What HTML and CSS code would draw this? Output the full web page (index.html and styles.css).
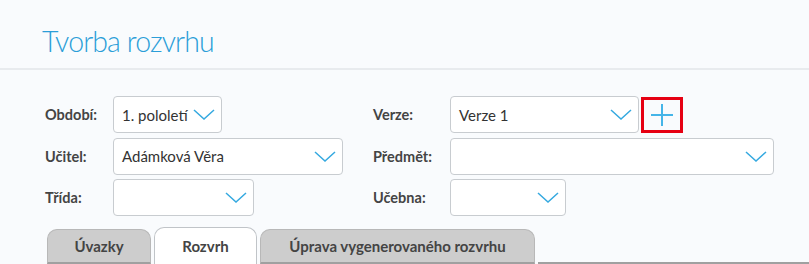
FILE: index.html
```html
<!DOCTYPE html>
<html lang="cs">
<head>
    <!-- 페이지의 메타 정보 -->
    <meta charset="UTF-8">
    <meta name="viewport" content="width=device-width, initial-scale=1.0">
    <title>Tvorba rozvrhu</title>

    <link rel="stylesheet" href="styles.css">
</head>

<body>
    <!-- 상단 제목 -->
    <div class="page-header">
        <h1 class="page-title">Tvorba rozvrhu</h1>
    </div>

    <!-- 필터 폼 -->
    <form class="filter-form">
        <div class="form-col form-col-left">
            <div class="form-row">
                <label class="form-label">Období:</label>
                <div class="select select-short">
                    <span class="select-value">1. pololetí</span>
                    <svg class="chevron" viewBox="0 0 22 11"><path d="M1 1 L11 10 L21 1"/></svg>
                </div>
            </div>
            <div class="form-row">
                <label class="form-label">Učitel:</label>
                <div class="select select-teacher">
                    <span class="select-value">Adámková Věra</span>
                    <svg class="chevron" viewBox="0 0 22 11"><path d="M1 1 L11 10 L21 1"/></svg>
                </div>
            </div>
            <div class="form-row">
                <label class="form-label">Třída:</label>
                <div class="select select-class">
                    <span class="select-value"></span>
                    <svg class="chevron" viewBox="0 0 22 11"><path d="M1 1 L11 10 L21 1"/></svg>
                </div>
            </div>
        </div>

        <div class="form-col form-col-right">
            <div class="form-row">
                <label class="form-label">Verze:</label>
                <div class="select select-version">
                    <span class="select-value">Verze 1</span>
                    <svg class="chevron" viewBox="0 0 22 11"><path d="M1 1 L11 10 L21 1"/></svg>
                </div>
                <!-- 새 버전 추가 버튼 -->
                <button type="button" class="add-btn">
                    <svg viewBox="0 0 24 24"><path d="M12 1 V23 M1 12 H23"/></svg>
                </button>
            </div>
            <div class="form-row">
                <label class="form-label">Předmět:</label>
                <div class="select select-subject">
                    <span class="select-value"></span>
                    <svg class="chevron" viewBox="0 0 22 11"><path d="M1 1 L11 10 L21 1"/></svg>
                </div>
            </div>
            <div class="form-row">
                <label class="form-label">Učebna:</label>
                <div class="select select-room">
                    <span class="select-value"></span>
                    <svg class="chevron" viewBox="0 0 22 11"><path d="M1 1 L11 10 L21 1"/></svg>
                </div>
            </div>
        </div>
    </form>

    <!-- 탭 메뉴 -->
    <div class="tabs">
        <div class="tab tab-loads">Úvazky</div>
        <div class="tab tab-active">Rozvrh</div>
        <div class="tab tab-edit">Úprava vygenerovaného rozvrhu</div>
        <div class="tabs-rest"></div>
    </div>
</body>
</html>
```
FILE: styles.css
```css
/* 페이지 기본 스타일 */
body {
    font-family: "Lato", "Open Sans", sans-serif;
    margin: 0;
    padding: 0;
    background-color: #f9fbfd;
    color: #333;
    overflow: hidden;
}

.page-header {
    height: 68px;
    border-bottom: 2px solid #e8ebee;
}

.page-title {
    margin: 0;
    padding: 24px 0 0 42px;
    font-family: "Lato", sans-serif;
    font-weight: 300;
    font-size: 28.5px;
    letter-spacing: -0.9px;
    line-height: 34px;
    color: #2b9ed8;
}

/* 폼 */
.filter-form {
    display: flex;
    padding: 26px 0 0 45px;
}

.form-col {
    display: flex;
    flex-direction: column;
    gap: 4.5px;
}

.form-col-left {
    width: 328px;
    flex-shrink: 0;
}

.form-label {
    width: 68px;
    flex-shrink: 0;
    font-family: "Lato", sans-serif;
    font-weight: bold;
    font-size: 14.5px;
    color: #444;
}

.form-col-right .form-label {
    width: 77px;
}

.form-row {
    display: flex;
    align-items: center;
}

.select {
    height: 37px;
    flex-shrink: 0;
    box-sizing: border-box;
    border: 1px solid #c8ccd0;
    border-radius: 4px;
    background-color: #fff;
    display: flex;
    align-items: center;
    justify-content: space-between;
    padding: 0 6px 0 8px;
}

.select-value {
    font-family: "Lato", sans-serif;
    font-size: 15px;
    color: #333;
}

.chevron {
    width: 22px;
    height: 11px;
    fill: none;
    stroke: #35a9e0;
    stroke-width: 1.5;
}

.select-short { width: 109px; }
.select-teacher { width: 230px; }
.select-class { width: 141px; }
.select-version { width: 189px; }
.select-subject { width: 324px; }
.select-room { width: 116px; }

.add-btn {
    width: 42px;
    height: 36px;
    margin-left: 2px;
    border: 3px solid #e60012;
    background: transparent;
    padding: 0;
    display: flex;
    align-items: center;
    justify-content: center;
    cursor: pointer;
}

.add-btn svg {
    width: 24px;
    height: 24px;
    fill: none;
    stroke: #45b5e8;
    stroke-width: 2;
}

/* 탭 */
.tabs {
    display: flex;
    align-items: flex-end;
    margin: 11px 0 0 47px;
    gap: 3px;
    height: 37px;
}

.tab {
    height: 35px;
    box-sizing: border-box;
    background-color: #cdcdcd;
    border: 1px solid #b8b8b8;
    border-bottom: 2px solid #a0a0a0;
    border-radius: 10px 10px 0 0;
    font-family: "Lato", sans-serif;
    font-weight: bold;
    font-size: 15px;
    color: #444;
    display: flex;
    align-items: center;
    justify-content: center;
}

.tab-loads { width: 104px; }
.tab-edit { width: 275px; }

.tab-active {
    width: 103px;
    height: 37px;
    background-color: #fff;
    border-color: #c0c4c8;
    border-bottom: none;
}

.tabs-rest {
    flex: 1;
    height: 0;
    border-bottom: 2px solid #a0a0a0;
}
```
